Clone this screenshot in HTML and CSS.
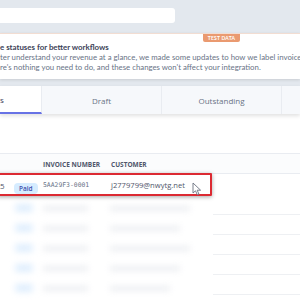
FILE: index.html
```html
<!DOCTYPE html>
<html lang="en">
<head>
    <meta charset="UTF-8">
    <title>Invoices</title>
    <link rel="stylesheet" href="styles.css">
</head>
<body>
    <div class="topbar">
        <div class="search"></div>
    </div>

    <div class="banner">
        <span class="badge">Test data</span>
        <div class="banner-title">e statuses for better workflows</div>
        <div class="banner-text">ter understand your revenue at a glance, we made some updates to how we label invoice</div>
        <div class="banner-text">re's nothing you need to do, and these changes won't affect your integration.</div>
    </div>

    <div class="tabs">
        <div class="tab tab-active">s</div>
        <div class="tab">Draft</div>
        <div class="tab">Outstanding</div>
        <div class="tab tab-last"></div>
    </div>

    <div class="content">
        <div class="table-head">
            <span></span>
            <span></span>
            <span>Invoice number</span>
            <span>Customer</span>
        </div>
        <div class="row">
            <span class="amount">5</span>
            <span><span class="pill">Paid</span></span>
            <span class="mono">5AA29F3-0001</span>
            <span class="email">j2779799@nwytg.net</span>
            <div class="highlight"></div>
            <svg class="cursor" width="10" height="14" viewBox="0 0 10 14">
                <path d="M1 1 L1 11 L3.5 8.8 L5.3 12.8 L6.9 12.1 L5.2 8.2 L8.6 8.2 Z" fill="#fff" stroke="#6b7280" stroke-width="0.9" stroke-linejoin="round"/>
            </svg>
        </div>
        <div class="rest">
            <div class="blurred">
                <div class="brow"><span class="bpill"></span><span class="bline w1"></span><span class="bline w2"></span></div>
                <div class="brow"><span class="bpill"></span><span class="bline w1"></span><span class="bline w3"></span></div>
                <div class="brow"><span class="bpill"></span><span class="bline w1"></span><span class="bline w2"></span></div>
                <div class="brow"><span class="bpill"></span><span class="bline w1"></span><span class="bline w3"></span></div>
                <div class="brow"><span class="bpill"></span><span class="bline w1"></span><span class="bline w4"></span></div>
            </div>
            <div class="plain">
                <div class="prow"></div>
                <div class="prow"></div>
                <div class="prow"></div>
                <div class="prow"></div>
                <div class="prow"></div>
            </div>
        </div>
    </div>
</body>
</html>
```

FILE: styles.css
```css
html, body {
    margin: 0;
    width: 300px;
    height: 300px;
    overflow: hidden;
}
body {
    background: #e3e8ee;
    font-family: "Lato", "Open Sans", sans-serif;
    color: #3c4257;
}
.topbar {
    height: 33px;
    padding-top: 8px;
    box-sizing: border-box;
}
.search {
    width: 175px;
    height: 15px;
    background: white;
    border-radius: 0 3px 3px 0;
}
.banner {
    position: relative;
    background: white;
    border-top: 1px solid #f2ddd2;
    height: 46px;
    box-sizing: border-box;
    padding-top: 8px;
    box-shadow: 0 1px 3px rgba(0, 0, 0, 0.12);
    white-space: nowrap;
    overflow: hidden;
}
.badge {
    position: absolute;
    left: 203px;
    top: 0;
    width: 37px;
    height: 8px;
    background: #ea9a70;
    color: white;
    font-size: 5px;
    font-weight: 700;
    line-height: 8px;
    text-align: center;
    text-transform: uppercase;
    letter-spacing: 0.2px;
    border-radius: 0 0 2px 2px;
}
.banner-title {
    font-size: 7.9px;
    font-weight: 700;
    line-height: 10px;
    color: #3c4257;
}
.banner-text {
    font-size: 7.8px;
    line-height: 10px;
    color: #697386;
}
.tabs {
    display: flex;
    margin-top: 7px;
    height: 28px;
    background: #f6f8fb;
    box-shadow: 0 2px 4px rgba(0, 0, 0, 0.12);
    position: relative;
}
.tab {
    width: 119px;
    border-right: 1px solid #e9ecf1;
    font-family: "Open Sans", sans-serif;
    font-size: 8px;
    color: #697386;
    display: flex;
    align-items: center;
    justify-content: center;
}
.tab-active {
    width: 42px;
    background: white;
    border-bottom: 2px solid #6772e5;
    justify-content: flex-start;
    box-sizing: border-box;
    color: #3c4257;
}
.tab-last {
    flex: 1;
    border-right: none;
}
.content {
    background: white;
    height: 147px;
    padding-top: 39px;
}
.table-head, .row {
    display: grid;
    grid-template-columns: 14px 29px 68px 1fr;
    align-items: center;
    border-top: 1px solid #e9ecf1;
}
.table-head {
    height: 17px;
    background: #fbfcfd;
    font-family: "Open Sans", sans-serif;
    font-size: 6.5px;
    font-weight: 700;
    text-transform: uppercase;
    color: #4f566b;
    padding-top: 2px;
}
.row {
    position: relative;
    box-sizing: border-box;
    height: 22px;
    padding-bottom: 3px;
    font-family: "Open Sans", sans-serif;
}
.amount {
    font-size: 8px;
    color: #4f566b;
}
.pill {
    display: inline-block;
    background: #d6ecff;
    color: #3d4eac;
    font-size: 6.5px;
    font-weight: 600;
    padding: 1px 5px;
    border-radius: 4px;
}
.mono {
    font-family: "DejaVu Sans Mono", monospace;
    font-size: 6.4px;
    color: #697386;
}
.email {
    font-size: 7.6px;
    color: #4f566b;
}
.highlight {
    position: absolute;
    left: -3px;
    top: -1px;
    width: 211px;
    height: 19px;
    border: 2px solid #dc2a32;
    border-radius: 1px;
    box-shadow: 0 1px 4px rgba(0, 0, 0, 0.35);
}
.cursor {
    position: absolute;
    left: 192px;
    top: 8px;
}
.rest {
    display: flex;
}
.blurred {
    width: 213px;
    filter: blur(3px);
    padding-top: 3px;
}
.brow {
    display: flex;
    align-items: center;
    height: 20px;
}
.bpill {
    width: 18px;
    height: 8px;
    margin-left: 15px;
    background: #dfeefd;
    border-radius: 3px;
}
.bline {
    height: 5px;
    background: #eceef2;
}
.w1 {
    width: 45px;
    margin-left: 10px;
}
.w2 {
    width: 80px;
    margin-left: 22px;
}
.w3 {
    width: 70px;
    margin-left: 22px;
}
.w4 {
    width: 60px;
    margin-left: 22px;
}
.plain {
    flex: 1;
}
.prow {
    height: 20px;
    border-bottom: 1px solid #eef0f3;
    box-sizing: border-box;
}
```
